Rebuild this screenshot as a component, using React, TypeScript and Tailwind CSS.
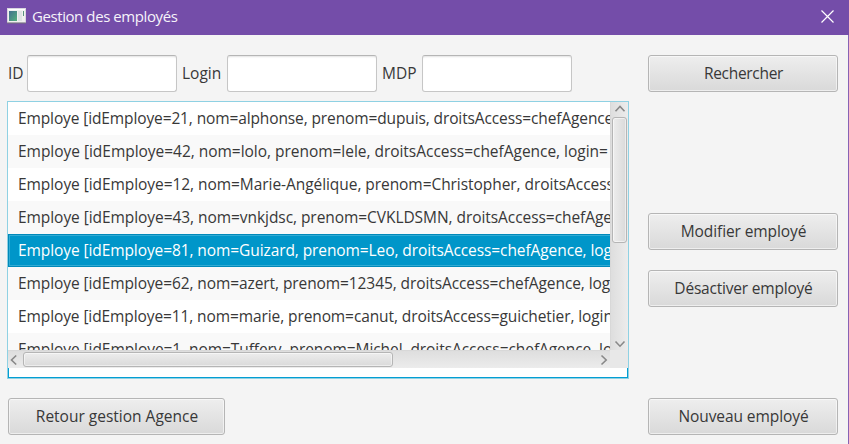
import type { ReactNode } from "react";

const EMPLOYEES = [
  { text: "Employe [idEmploye=21, nom=alphonse, prenom=dupuis, droitsAccess=chefAgence", tracking: "tracking-[-0.12px]" },
  { text: "Employe [idEmploye=42, nom=lolo, prenom=lele, droitsAccess=chefAgence, login=", tracking: "tracking-[-0.03px]" },
  { text: "Employe [idEmploye=12, nom=Marie-Angélique, prenom=Christopher, droitsAccess", tracking: "tracking-[-0.06px]" },
  { text: "Employe [idEmploye=43, nom=vnkjdsc, prenom=CVKLDSMN, droitsAccess=chefAge", tracking: "tracking-[-0.06px]" },
  { text: "Employe [idEmploye=81, nom=Guizard, prenom=Leo, droitsAccess=chefAgence, log", tracking: "tracking-[-0.09px]" },
  { text: "Employe [idEmploye=62, nom=azert, prenom=12345, droitsAccess=chefAgence, log", tracking: "tracking-[-0.09px]" },
  { text: "Employe [idEmploye=11, nom=marie, prenom=canut, droitsAccess=guichetier, login", tracking: "tracking-[-0.1px]" },
  { text: "Employe [idEmploye=1, nom=Tuffery, prenom=Michel, droitsAccess=chefAgence, lo", tracking: "tracking-[-0.07px]" },
];
const SELECTED = 4;

function Button({ children, className = "" }: { children: ReactNode; className?: string }) {
  return (
    <button
      className={`flex h-[37px] shrink-0 items-center justify-center rounded-[3px] border border-[#b5b5b5] bg-linear-to-b from-[#eeeeee] to-[#d9d9d9] pb-px pl-px shadow-[inset_0_0_0_1px_rgba(255,255,255,0.55)] ${className}`}
    >
      {children}
    </button>
  );
}

function Field({ label, className = "" }: { label: string; className?: string }) {
  return (
    <label className="flex items-center">
      <span className={`pb-px ${className}`}>{label}</span>
      <input className="h-[37px] w-[150px] rounded-[3px] border border-[#c6c6c6] border-t-[#b5b5b5] bg-white shadow-[inset_0_2px_2px_-1px_#e2e2e2] outline-none" />
    </label>
  );
}

function Chevron({ d, className }: { d: string; className: string }) {
  return (
    <svg className={`shrink-0 ${className}`} fill="none" stroke="#888888" strokeWidth="1.6">
      <path d={d} />
    </svg>
  );
}

export default function App() {
  return (
    <div className="flex h-[444px] w-[849px] flex-col overflow-hidden bg-[#f4f4f4] font-['Open_Sans','Noto_Sans',sans-serif] text-[15.5px] leading-5 text-[#383838]">
      <header className="flex h-[35px] shrink-0 items-center bg-[#744da9] pr-[15px] pl-[7px] text-[#f6f3fa]">
        <svg width="19" height="16" viewBox="0 0 19 16" className="mb-[3px] shrink-0">
          <defs>
            <linearGradient id="pane" x1="0" y1="0" x2="1" y2="1">
              <stop offset="0" stopColor="#42708f" />
              <stop offset="1" stopColor="#55b07d" />
            </linearGradient>
          </defs>
          <rect x="0.5" y="0.5" width="18" height="14" fill="#f0f0f0" stroke="#d9d6df" />
          <path d="M0 15h19" stroke="#77777c" />
          <rect x="2" y="3" width="8" height="10" fill="url(#pane)" />
          <rect x="11" y="3" width="4" height="10" fill="#dfe3e4" />
          <path d="M16.5 3v5" stroke="#58927e" />
          <path d="M1 1.5h17" stroke="#ffffff" />
        </svg>
        <h1 className="ml-1.5 grow pb-[3px] text-[15px] tracking-[-0.42px]">Gestion des employés</h1>
        <svg width="13" height="13" viewBox="0 0 13 13" fill="none" stroke="#fff" strokeWidth="1.2" className="mb-[3px]">
          <path d="M0.5 0.5l12 12M12.5 0.5l-12 12" />
        </svg>
      </header>

      <div className="flex grow justify-between border-r border-[#8763b5] pt-5 pr-2.5 pb-[9px] pl-[7px]">
        <main className="flex w-[622px] flex-col">
          <div className="flex">
            <Field label="ID" className="w-5 pl-px" />
            <Field label="Login" className="w-[50px] pl-[5px]" />
            <Field label="MDP" className="w-[45px] pl-[5px]" />
          </div>

          <section className="mt-[9px] flex h-[278px] w-[622px] flex-col border border-[#8fd1e3] bg-white">
            <div className="flex h-[248px] shrink-0">
              <ul className="h-[248px] w-[602px] overflow-hidden">
                {EMPLOYEES.map(({ text, tracking }, i) => (
                  <li
                    key={text}
                    className={`flex h-[33px] items-center pb-px pl-2.5 whitespace-nowrap ${tracking} ${
                      i === SELECTED
                        ? "bg-[#0096c9] text-white shadow-[inset_0_1px_0_#0089ba,inset_1px_0_0_#0089ba,inset_0_-1px_0_#0089ba,inset_0_2px_0_#32abd4,inset_2px_0_0_#32abd4,inset_0_-2px_0_#32abd4]"
                        : i % 2
                          ? "bg-[#f9f9f9]"
                          : "bg-white"
                    }`}
                  >
                    {text}
                  </li>
                ))}
              </ul>
              <div className="flex w-[18px] flex-col items-center border-l border-[#d8d8d8] bg-linear-to-r from-[#dedede] to-[#ececec]">
                <Chevron className="mt-[3px] h-2 w-3" d="M1.5 6.2L6 1.5l4.5 4.7" />
                <div className="mt-[4px] h-[126px] w-[15px] rounded-[3px] border border-[#b5b5b5] bg-linear-to-r from-[#ededed] to-[#dadada] shadow-[inset_0_0_0_1px_rgba(255,255,255,0.5)]" />
                <Chevron className="mt-auto mb-[2px] h-2 w-3" d="M1.5 1.5L6 6.2l4.5-4.7" />
              </div>
            </div>
            <div className="flex h-[18px] shrink-0">
              <div className="flex w-[602px] items-center border-t border-[#d8d8d8] bg-linear-to-b from-[#dedede] to-[#ececec]">
                <Chevron className="ml-[2px] h-3 w-2" d="M6.2 1.5L1.5 6l4.7 4.5" />
                <div className="ml-[5px] h-[15px] w-[370px] rounded-[3px] border border-[#b5b5b5] bg-linear-to-b from-[#ededed] to-[#dadada] shadow-[inset_0_0_0_1px_rgba(255,255,255,0.5)]" />
                <Chevron className="mr-[2px] ml-auto h-3 w-2" d="M1.5 1.5L6.2 6l-4.7 4.5" />
              </div>
              <div className="w-[18px] bg-[#e8e8e8]" />
            </div>
            <div className="grow border-x border-b border-[#039ed3]" />
          </section>

          <Button className="mt-auto ml-px w-[217px]">Retour gestion Agence</Button>
        </main>

        <aside className="flex w-[190px] flex-col">
          <Button className="tracking-[-0.3px]">Rechercher</Button>
          <Button className="mt-[121px] tracking-[-0.1px]">Modifier employé</Button>
          <Button className="mt-5 tracking-[-0.2px]">Désactiver employé</Button>
          <Button className="mt-auto tracking-[-0.08px]">Nouveau employé</Button>
        </aside>
      </div>
    </div>
  );
}
